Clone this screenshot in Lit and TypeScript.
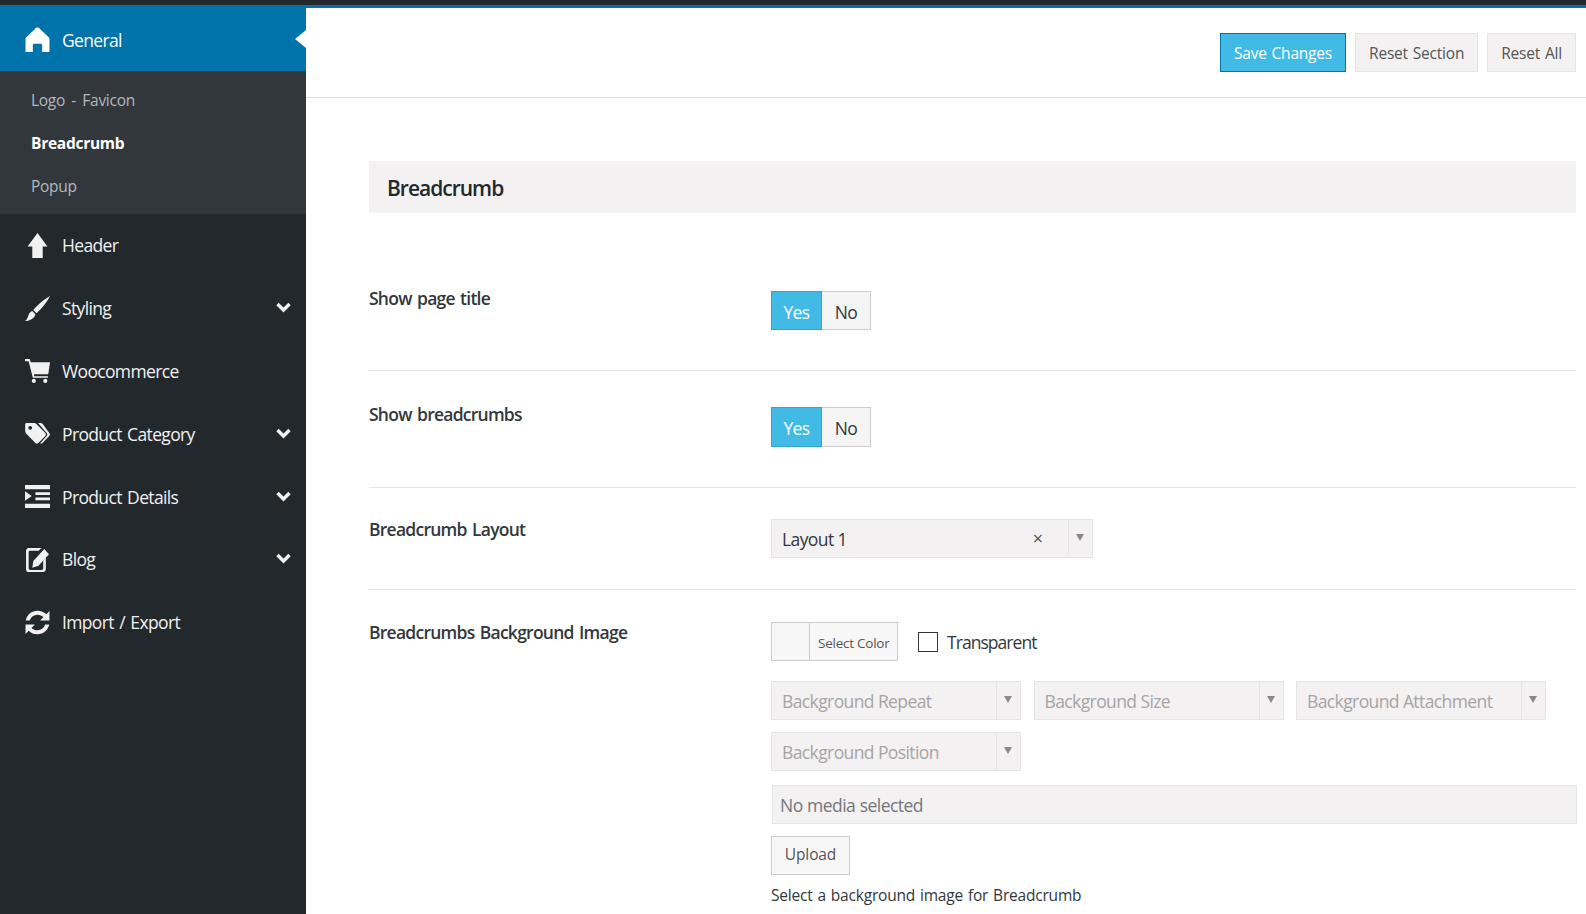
import { LitElement, html, css, svg } from "lit";
import { customElement } from "lit/decorators.js";

const icons: Record<string, unknown> = {
  home: svg`<path d="M12 0.5c1 0 1.700.6 2.400 1.300L22.500 9.500c.6.6 1 1 1 2V24H16.500v-6.500c0-1-.5-1.500-1.500-1.500H9c-1 0-1.500.5-1.500 1.500V24H.5V11.500c0-1 .4-1.400 1-2l8.100-7.700C10.300 1.100 11 .5 12 .5z"/>`,
  up: svg`<path d="M12 0 21.500 13H17v11H7V13H2.500z"/>`,
  brush: svg`<path d="M24 0C19 3 12 8 8 13.500L11 16.500C16 12 21 6 24 0z"/><path d="M7 14.500 10 17.500C9.500 21 5 24 0 24c2.500-1.500 2.500-4 3.500-6 1-2 2-3 3.500-3.500z"/>`,
  cart: svg`<path d="M0 1h4.500l1 3H24l-1.500 10.500c0 .7-.6 1.200-1.300 1.200H8.500l.4 1.800H22v1.500H7.500L3.500 3H0z"/><circle cx="8.500" cy="22" r="2"/><circle cx="19.500" cy="22" r="2"/>`,
  tags: svg`<path fill-rule="evenodd" d="M1.500 2h7c1 0 2 .5 2.700 1.200l8.300 8.300c.8.8.8 2 0 2.800l-6.700 6.700c-.8.800-2 .8-2.800 0L1.700 12.700C.8 11.800.2 10.800.2 9.700V3.300C.2 2.600.8 2 1.500 2zM5 4.700a1.800 1.800 0 1 0 0 3.600 1.800 1.800 0 0 0 0-3.600z"/><path d="M12.500 2h2.200c1 0 1.800.4 2.500 1.100l6.100 8.400c.800.800.800 2 0 2.800l-6.500 6.700c-.6.600-1.500.8-2.200.4l6.200-7.100c.8-.8.800-2 0-2.800z"/>`,
  indent: svg`<path fill-rule="evenodd" d="M0 1h24v4H0zM10 8h14v2.500H10zM10 13h14v2.500H10zM0 19h24v4H0zM0 7l6.500 4.500L0 16z"/>`,
  edit: svg`<path fill-rule="evenodd" d="M3.500 1H16l-3 2.500H5c-1 0-1.500.500-1.500 1.500v15.500c0 1 .5 1.500 1.500 1.500h11c1 0 1.500-.5 1.500-1.500V13l2.500-3v11c0 1.700-1.300 3-3 3H3.500C2 24 1 22.700 1 21V4c0-1.700 1-3 2.500-3z"/><path d="M18.500 2 23 7 13 18l-6 2 1-6.500z"/>`,
  refresh: svg`<path d="M23.500 1v9h-9l3.300-3.200C16.300 5.400 14.300 4.500 12 4.500c-3.500 0-6.200 2-7.400 5.500H.7C2 4.300 6.500.7 12 .7c3.300 0 6.200 1.200 8.500 3.400zM.5 23v-9h9l-3.300 3.200c1.500 1.400 3.500 2.300 5.800 2.300 3.500 0 6.200-2 7.400-5.500h3.900C22 19.700 17.500 23.300 12 23.300c-3.300 0-6.200-1.200-8.500-3.400z"/>`,
};

const menu = [
  { label: "Header", icon: "up", sub: false },
  { label: "Styling", icon: "brush", sub: true },
  { label: "Woocommerce", icon: "cart", sub: false },
  { label: "Product Category", icon: "tags", sub: true },
  { label: "Product Details", icon: "indent", sub: true },
  { label: "Blog", icon: "edit", sub: true },
  { label: "Import / Export", icon: "refresh", sub: false },
];

@customElement("app-root")
export class AppRoot extends LitElement {
  static styles = css`
    :host {
      display: block;
      height: 914px;
      overflow: hidden;
      background: #23282d;
      font-family: "Open Sans", "Noto Sans", sans-serif;
      color: #32373c;
    }

    .page {
      display: flex;
      height: 909px;
      margin-top: 5px;
    }

    /* Sidebar */
    .sidebar {
      width: 306px;
      flex: none;
      background: #23282d;
      color: #f1f1f1;
    }

    .item {
      position: relative;
      display: flex;
      align-items: center;
      box-sizing: border-box;
      height: 62.8px;
      padding-left: 25px;
      font-size: 17.5px;
      letter-spacing: -0.65px;
      word-spacing: 1.5px;
    }

    .item.active {
      height: 66px;
      padding-top: 3px;
      background: #0073aa;
      color: #fff;
    }

    .item.active::after {
      content: "";
      position: absolute;
      right: 0;
      top: 25px;
      border: 9px solid transparent;
      border-left-width: 0;
      border-right: 11px solid #fff;
    }

    .item .ico {
      width: 25px;
      height: 25px;
      margin-right: 12px;
      fill: currentColor;
      flex: none;
    }

    .item.active .ico {
      margin-top: -1px;
    }

    .chev {
      position: absolute;
      right: 15px;
      top: 50%;
      margin-top: -6px;
      width: 15px;
      height: 11px;
      fill: none;
      stroke: #f1f1f1;
      stroke-width: 3.4;
    }

    .subs {
      height: 143px;
      padding-top: 8px;
      box-sizing: border-box;
      background: #32373c;
    }

    .subs div {
      height: 43px;
      line-height: 43px;
      padding-left: 31px;
      font-size: 15.500px;
      letter-spacing: -0.27px;
      word-spacing: 2.5px;
      color: #b4b9be;
    }

    .subs div.on {
      color: #fff;
      font-weight: 700;
    }

    /* Main panel */
    .main {
      flex: 1;
      background: #fff;
      box-shadow: inset 0 3px 0 #0073aa;
      padding: 3px 10px 0 63px;
      min-width: 0;
    }

    .actions {
      display: flex;
      justify-content: flex-end;
      gap: 9px;
      height: 90px;
      padding-top: 25px;
      box-sizing: border-box;
      margin-left: -63px;
      margin-right: -10px;
      padding-right: 10px;
      border-bottom: 1px solid #dedede;
    }

    .btn {
      box-sizing: border-box;
      height: 39px;
      line-height: 39px;
      padding: 0 13px;
      font-size: 15.500px;
      letter-spacing: -0.2px;
      word-spacing: 1px;
      background: #f3f1f2;
      border: 1px solid #e5e5e5;
      color: #555;
      white-space: nowrap;
    }

    .btn.primary {
      background: #41bbe5;
      border-color: #0073aa;
      color: #fff;
    }

    h2 {
      margin: 63px 0 0;
      height: 52px;
      line-height: 54px;
      padding-left: 18px;
      background: #f3f1f2;
      font-size: 21px;
      font-weight: 600;
      letter-spacing: -1px;
      color: #23282d;
    }

    .row {
      display: grid;
      grid-template-columns: 402px 1fr;
      border-bottom: 1px solid #e5e5e5;
    }

    .row:last-child {
      border-bottom: 0;
    }

    .label {
      font-size: 17.500px;
      font-weight: 600;
      letter-spacing: -0.75px;
      word-spacing: 1.5px;
      color: #32373c;
      line-height: 24px;
    }

    .toggle {
      display: flex;
      width: 100px;
      height: 39px;
      box-sizing: border-box;
      font-size: 17.500px;
      letter-spacing: -0.6px;
      line-height: 41px;
    }

    .toggle span {
      display: block;
      text-align: center;
      box-sizing: border-box;
    }

    .toggle .yes {
      width: 51px;
      background: #41bbe5;
      border: 1px solid #35a4cc;
      color: #fff;
    }

    .toggle .no {
      flex: 1;
      background: #f5f5f5;
      border: 1px solid #ccc;
      border-left: 0;
      color: #32373c;
    }

    .select {
      display: flex;
      box-sizing: border-box;
      width: 250px;
      height: 39px;
      background: #f3f1f2;
      border: 1px solid #e5e5e5;
      font-size: 17.500px;
      letter-spacing: -0.6px;
      color: #a5a5a5;
    }

    .select.value {
      width: 322px;
      color: #32373c;
    }

    .select .text {
      flex: 1;
      padding-left: 10px;
      line-height: 38px;
      white-space: nowrap;
    }

    .select .clear {
      width: 37px;
      margin-right: 12px;
      text-align: center;
      line-height: 37px;
      font-size: 18px;
      color: #555;
    }

    .select .arrow {
      position: relative;
      width: 23px;
      border-left: 1px solid #e5e5e5;
    }

    .select .arrow::after {
      content: "";
      position: absolute;
      left: 7px;
      top: 14px;
      border: 4px solid transparent;
      border-top: 7px solid #888;
      border-bottom: 0;
    }

    .colors {
      display: flex;
      align-items: center;
      margin-bottom: 20px;
    }

    .swatch {
      display: flex;
      box-sizing: border-box;
      width: 127px;
      height: 39px;
      background: #f7f7f7;
      border: 1px solid #ccc;
      font-size: 13.500px;
      letter-spacing: -0.25px;
      color: #555;
    }

    .swatch i {
      width: 37px;
      border-right: 1px solid #ccc;
    }

    .swatch b {
      flex: 1;
      font-weight: 400;
      padding-left: 8px;
      line-height: 40px;
      white-space: nowrap;
    }

    .check {
      width: 20px;
      height: 20px;
      box-sizing: border-box;
      margin: 0 9px 0 20px;
      border: 1px solid #32373c;
    }

    .check-label {
      font-size: 17.500px;
      letter-spacing: -0.95px;
    }

    .selects {
      display: flex;
      flex-wrap: wrap;
      gap: 12px 12.5px;
    }

    .media {
      box-sizing: border-box;
      height: 39px;
      line-height: 38px;
      margin: 14px -1px 12px 1px;
      padding-left: 7px;
      background: #f3f1f2;
      border: 1px solid #e5e5e5;
      font-size: 17.500px;
      letter-spacing: -0.55px;
      word-spacing: 0.5px;
      color: #72777c;
    }

    .upload {
      box-sizing: border-box;
      width: 79px;
      height: 39px;
      line-height: 35px;
      text-align: center;
      background: #f7f7f7;
      border: 1px solid #ccc;
      font-size: 15.500px;
      letter-spacing: -0.1px;
      color: #555;
    }

    .help {
      margin-top: 9px;
      font-size: 15.500px;
      letter-spacing: -0.2px;
      word-spacing: 1.1px;
      line-height: 22px;
    }

    .r1, .r2, .r3 { box-sizing: border-box; }
    .r1 { height: 158px; padding-top: 78px; }
    .r2 { height: 117px; padding-top: 36px; }
    .r2 .toggle { height: 40px; }
    .r3 { height: 102px; padding-top: 31px; }
    .r4 { padding-top: 32px; }
    .r1 .label { margin-top: -5px; }
    .r2 .label { margin-top: -5px; }
    .r3 .label { margin-top: -2px; }
    .r4 .label { margin-top: -2px; }
  `;

  private _toggle() {
    return html`<div class="toggle"><span class="yes">Yes</span><span class="no">No</span></div>`;
  }

  private _select(text: string) {
    return html`<div class="select">
      <span class="text">${text}</span><span class="arrow"></span>
    </div>`;
  }

  render() {
    return html`
      <div class="page">
        <nav class="sidebar">
          <div class="item active">
            <svg class="ico" viewBox="0 0 24 24">${icons.home}</svg>General
          </div>
          <div class="subs">
            <div>Logo - Favicon</div>
            <div class="on">Breadcrumb</div>
            <div>Popup</div>
          </div>
          ${menu.map(
            (m) => html`<div class="item">
              <svg class="ico" viewBox="0 0 24 24">${icons[m.icon]}</svg>${m.label}
              ${m.sub
                ? html`<svg class="chev" viewBox="0 0 15 11"><path d="M1.500 2l6 6 6-6"/></svg>`
                : ""}
            </div>`
          )}
        </nav>
        <div class="main">
          <div class="actions">
            <div class="btn primary">Save Changes</div>
            <div class="btn">Reset Section</div>
            <div class="btn">Reset All</div>
          </div>
          <h2>Breadcrumb</h2>
          <div class="row r1">
            <div class="label">Show page title</div>
            <div>${this._toggle()}</div>
          </div>
          <div class="row r2">
            <div class="label">Show breadcrumbs</div>
            <div>${this._toggle()}</div>
          </div>
          <div class="row r3">
            <div class="label">Breadcrumb Layout</div>
            <div>
              <div class="select value">
                <span class="text">Layout 1</span><span class="clear">×</span><span class="arrow"></span>
              </div>
            </div>
          </div>
          <div class="row r4">
            <div class="label">Breadcrumbs Background Image</div>
            <div>
              <div class="colors">
                <div class="swatch"><i></i><b>Select Color</b></div>
                <span class="check"></span>
                <span class="check-label">Transparent</span>
              </div>
              <div class="selects">
                ${this._select("Background Repeat")}
                ${this._select("Background Size")}
                ${this._select("Background Attachment")}
                ${this._select("Background Position")}
              </div>
              <div class="media">No media selected</div>
              <div class="upload">Upload</div>
              <div class="help">Select a background image for Breadcrumb</div>
            </div>
          </div>
        </div>
      </div>
    `;
  }
}
